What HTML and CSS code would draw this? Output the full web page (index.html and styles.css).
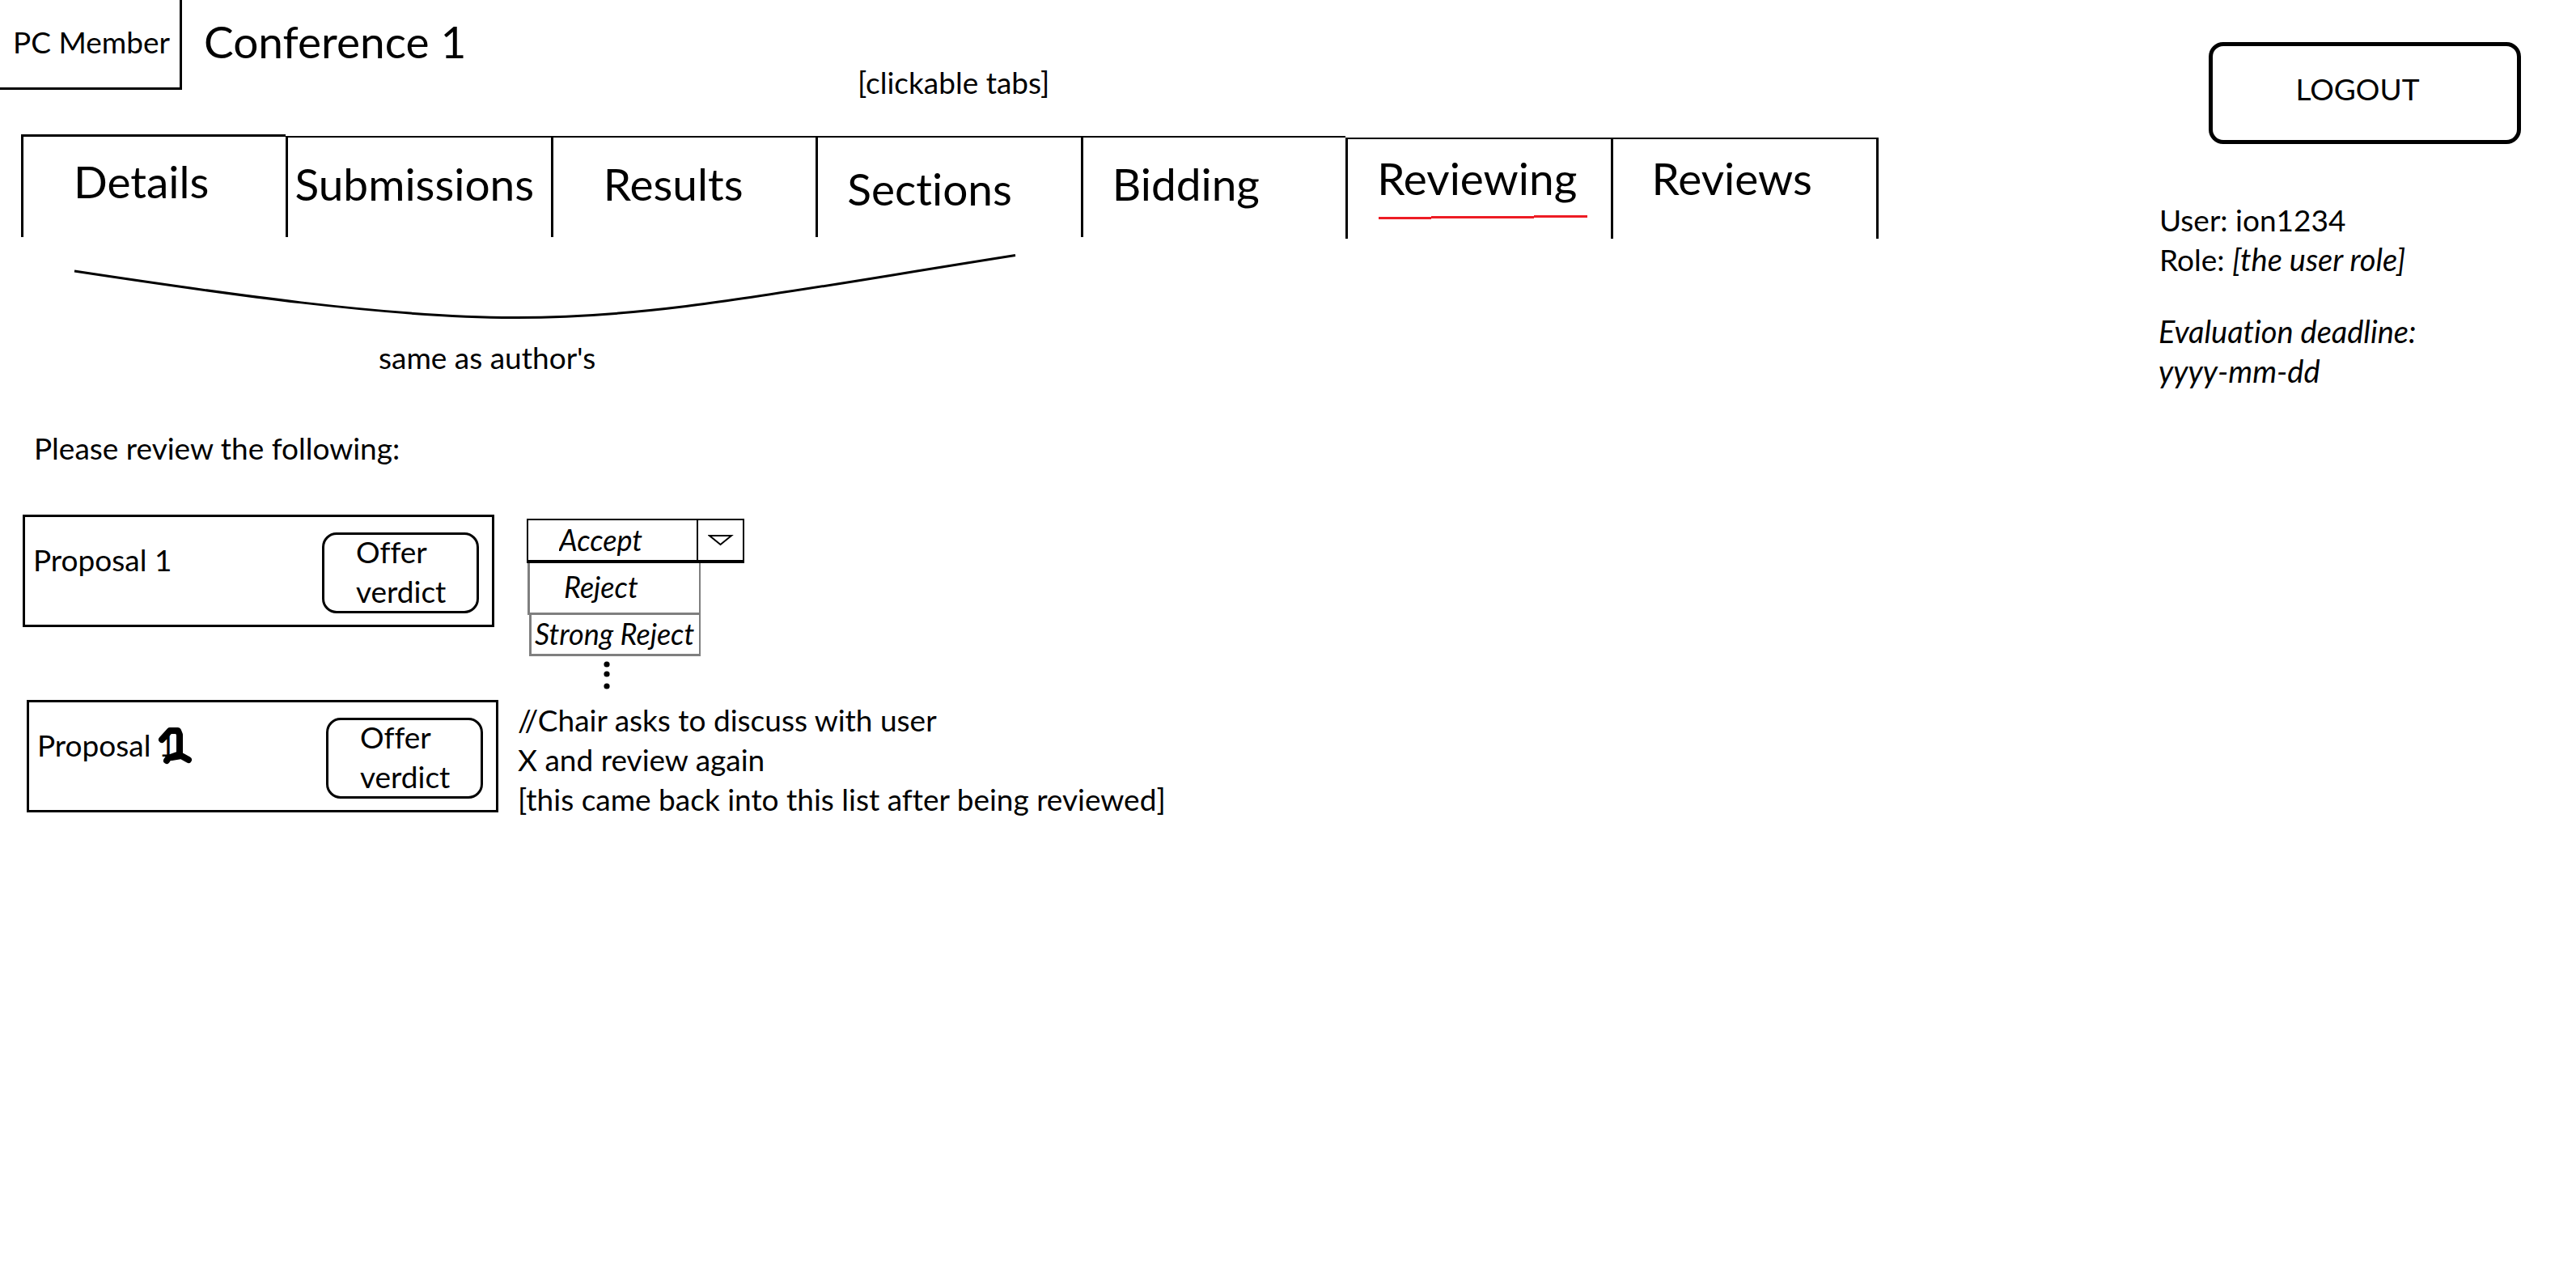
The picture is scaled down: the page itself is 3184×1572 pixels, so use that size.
FILE: index.html
```html
<!DOCTYPE html>
<html lang="en">
<head>
<meta charset="utf-8">
<title>Conference 1 - Reviewing</title>
<link rel="stylesheet" href="styles.css">
</head>
<body>
<div class="page">
  <main class="main">
    <header class="header">
      <div class="role-tag">PC Member</div>
      <h1 class="title">Conference 1</h1>
      <p class="hint">[clickable tabs]</p>
    </header>

    <nav class="tabs">
      <a class="tab tab-first indent-l" href="#details">Details</a>
      <a class="tab indent-s" href="#submissions">Submissions</a>
      <a class="tab indent-l" href="#results">Results</a>
      <a class="tab tab-low indent-m" href="#sections">Sections</a>
      <a class="tab indent-m" href="#bidding">Bidding</a>
      <a class="tab tab-late indent-m" href="#reviewing" aria-current="page">Reviewing
        <svg class="underline" width="258" height="5" viewBox="0 0 258 5"><path d="M0 3.5H65M65 2.5H192M192 1.5H258" stroke="#ed1c24" stroke-width="3"/></svg>
      </a>
      <a class="tab tab-late tab-last indent-n" href="#reviews">Reviews</a>
    </nav>

    <figure class="same">
      <svg class="curve" width="1170" height="84" viewBox="90 312 1170 84"><path d="M92 335C270 362 480 392.500 635 392.500C810 393 960 362 1255 315.500" fill="none" stroke="#000" stroke-width="3"/></svg>
      <figcaption>same as author's</figcaption>
    </figure>

    <h2 class="intro">Please review the following:</h2>

    <section class="row">
      <article class="card">
        <span class="name">Proposal 1</span>
        <button class="verdict" type="button"><span>Offer<br>verdict</span></button>
      </article>
      <div class="picker">
        <div class="combo">
          <select class="select" aria-label="Verdict">
            <option>Accept</option>
            <option>Reject</option>
            <option>Strong Reject</option>
          </select>
          <span class="arrow"><svg width="32" height="16" viewBox="0 0 32 16"><path d="M2 2H29L15.500 13Z" fill="none" stroke="#000" stroke-width="2"/></svg></span>
        </div>
        <ul class="options">
          <li class="option option-center">Reject</li>
          <li class="option option-tight">Strong Reject</li>
        </ul>
        <svg class="more" width="8" height="36" viewBox="0 0 8 36"><circle cx="4" cy="5" r="3.600"/><circle cx="4" cy="17" r="3.600"/><circle cx="4" cy="32" r="3.600"/></svg>
      </div>
    </section>

    <section class="row row-shifted">
      <article class="card">
        <span class="name">Proposal <span class="scribbled">1<svg class="scribble" width="44" height="48" viewBox="195 896 44 48"><path d="M200 912L210 901H220L222 906V930L208 935L206 938M212 934L224 932L233 937" fill="none" stroke="#000" stroke-width="8" stroke-linecap="round" stroke-linejoin="round"/></svg></span></span>
        <button class="verdict" type="button"><span>Offer<br>verdict</span></button>
      </article>
      <p class="remark">//Chair asks to discuss with user<br>X and review again<br>[this came back into this list after being reviewed]</p>
    </section>
  </main>

  <aside class="side">
    <button class="logout" type="button">LOGOUT</button>
    <p class="user">User: ion1234<br>Role: <em>[the user role]</em></p>
    <p class="deadline"><em>Evaluation deadline:<br>yyyy-mm-dd</em></p>
  </aside>
</div>
</body>
</html>
```

FILE: styles.css
```css
* { box-sizing: border-box; }

body {
  margin: 0;
  background: #fff;
  color: #000;
  font: 37px/49px Lato, "Liberation Sans", sans-serif;
  font-variant-ligatures: none;
}

h1, h2, p, ul, figure { margin: 0; padding: 0; font-weight: 400; }
em { font-size: 38px; }

button, select {
  font: inherit;
  font-variant-ligatures: none;
  color: inherit;
  background: #fff;
}

.page { display: grid; grid-template-columns: 1fr 516px; }

.header { display: flex; align-items: flex-start; height: 166px; }
.role-tag {
  width: 225px;
  padding: 27px 0 32px 16px;
  border: solid #000;
  border-width: 0 3px 3px 0;
}
.title { width: 835px; padding: 19px 0 0 27px; font-size: 55px; line-height: 64px; }
.hint { padding-top: 77px; }

.tabs { display: grid; grid-template-columns: repeat(6, 82fr) 83fr; margin: 0 346px 0 26px; }
.tab {
  position: relative;
  height: 125px;
  margin-top: 2px;
  padding-top: 25px;
  border-top: 2px solid #000;
  border-left: 3px solid #000;
  color: inherit;
  font-size: 55px;
  line-height: 64px;
  text-decoration: none;
}
.tab-first { height: 127px; margin-top: 0; padding-top: 23px; border-top-width: 3px; }
.tab-low { padding-top: 31px; }
.tab-late { margin-top: 4px; padding-top: 16px; }
.tab-last { border-right: 3px solid #000; }
.indent-s { padding-left: 8px; }
.indent-m { padding-left: 36px; }
.indent-n { padding-left: 48px; }
.indent-l { padding-left: 62px; }
.underline { position: absolute; left: 38px; top: 94px; }

.same { margin-top: 17px; }
.curve { display: block; margin: 0 0 21px 90px; }
.same figcaption { padding-left: 468px; }

.intro { margin: 63px 0 58px 42px; font-size: 37px; }

.row { display: flex; align-items: flex-start; gap: 40px; min-height: 229px; padding-left: 28px; }
.row-shifted { gap: 24px; padding-left: 33px; }

.card {
  display: flex;
  justify-content: space-between;
  align-items: flex-start;
  width: 583px;
  height: 139px;
  padding: 19px 16px 0 10px;
  border: 3px solid #000;
}
.name { padding-top: 9px; }
.scribbled { position: relative; }
.scribble { position: absolute; left: -1px; top: 0; }
.verdict {
  display: flex;
  align-items: center;
  width: 194px;
  height: 100px;
  padding: 0 0 4px 39px;
  border: 3px solid #000;
  border-radius: 18px;
  text-align: left;
}

.picker { width: 269px; padding-top: 5px; font-size: 36px; font-style: italic; }
.combo { display: grid; grid-template-columns: 1fr 57px; border: 2px solid #000; border-bottom-width: 4px; }
.select {
  width: 100%;
  min-width: 0;
  height: 49px;
  padding: 0 0 4px 38px;
  border: 0;
  border-radius: 0;
  appearance: none;
  font-style: italic;
}
.arrow { display: flex; align-items: center; justify-content: center; border-left: 2px solid #000; }
.options { width: 215px; padding-left: 1px; list-style: none; }
.option { border: solid #7f7f7f; border-width: 0 2px 3px 3px; }
.option-center { height: 64px; padding: 5px 0 0 42px; }
.option-tight { height: 51px; margin-left: 2px; padding-left: 4px; line-height: 47px; white-space: nowrap; }
.more { display: block; margin: 5px 0 0 95px; }

.side { padding-top: 52px; }
.logout {
  display: block;
  width: 386px;
  height: 126px;
  margin-left: 62px;
  padding: 0 18px 12px 0;
  border: 5px solid #000;
  border-radius: 18px;
}
.user { padding: 69px 0 0 1px; }
.deadline { padding-top: 40px; }
```
